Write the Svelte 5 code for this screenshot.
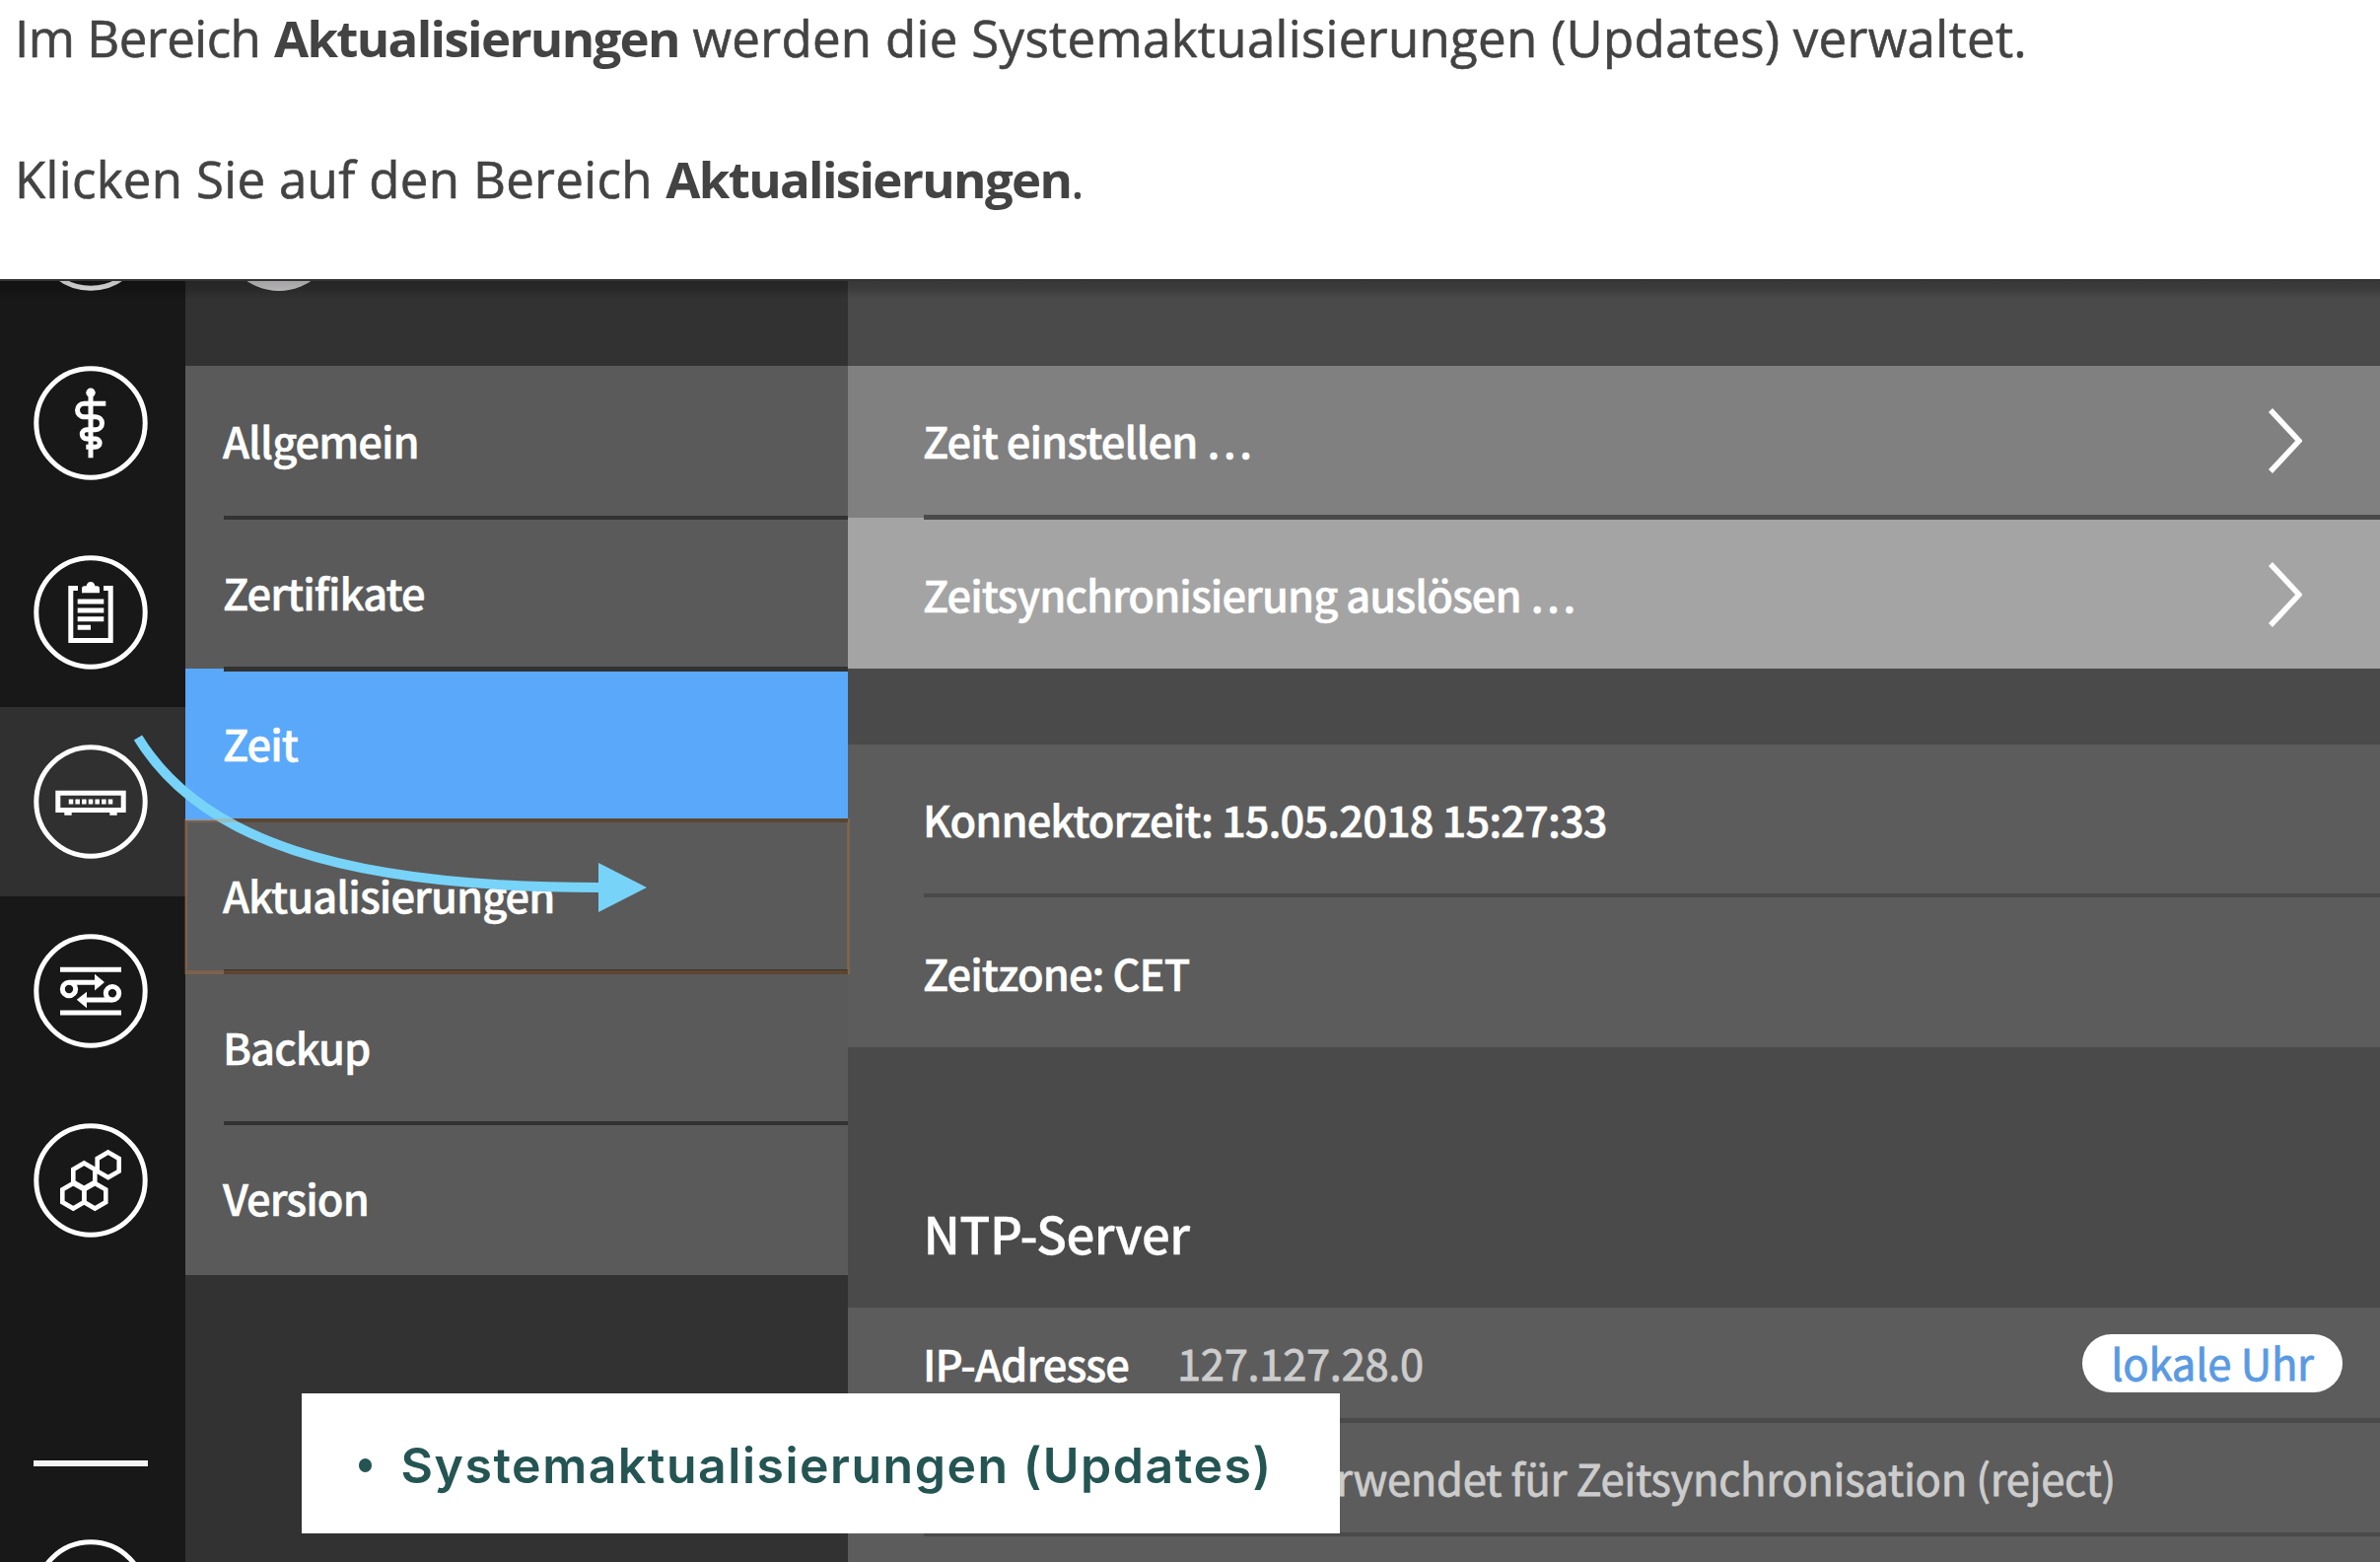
<script>
  const menu = ['Allgemein', 'Zertifikate', 'Zeit', 'Aktualisierungen', 'Backup', 'Version'];
  const selected = 'Zeit';
  const focused = 'Aktualisierungen';
  const rail = ['home', 'medical', 'clipboard', 'device', 'network', 'modules'];
  const hexes = [[75.7, 42.3], [51.3, 53.3], [40.3, 73.7], [62.3, 73.7]];
  const hex = ([x, y]) =>
    `M${x} ${y - 12.8}l11 6.4v12.8l-11 6.4l-11 -6.4v-12.8z`;
  const actions = [
    { label: 'Zeit einstellen …', cls: 'a1' },
    { label: 'Zeitsynchronisierung auslösen …', cls: 'a2' }
  ];
</script>

<div class="page">
  <section class="intro">
    <p class="l1"><span>Im Bereich</span> <b>Aktualisierungen</b> werden die Systemaktualisierungen (Updates) verwaltet.</p>
    <p class="l2">Klicken Sie auf den Bereich <b>Aktualisierungen</b>.</p>
  </section>

  <section class="shot">
    <nav class="rail">
      {#each rail as icon}
        <div class="slot" class:active={icon === 'device'}>
          <svg class="icon" viewBox="0 0 116 116">
            <circle cx="58" cy="58" r="55.2" />
            {#if icon === 'medical'}
              <circle class="solid" cx="58" cy="27.3" r="4.7" />
              <path d="M58 27V93.3" />
              <path d="M73.3 38.3H51.2a6.7 6.7 0 0 0 0 13.4H63a6.5 6.5 0 0 1 0 13H53.9a4.65 4.65 0 0 0 0 9.3H63a4.15 4.15 0 0 1 0 8.3H53.3" />
            {:else if icon === 'clipboard'}
              <path d="M45 33.5H37.8V86.5H78.2V33.5H71" />
              <path class="solid" d="M49 38.3V34q0-2.7 2.7-2.7H53.5q1-4.3 4.5-4.3t4.5 4.3H64.3q2.7 0 2.7 2.7v4.3z" />
              <path d="M44.7 47H71.3M44.7 56H71.3M44.7 64.7H71.3M44.7 73.3H58" />
            {:else if icon === 'device'}
              <rect x="24.8" y="49.2" width="66.4" height="17.3" />
              <path class="solid" d="M31.3 69h7.4v2.7h-7.4zM77.3 69h7.4v2.7h-7.4z" />
              <path class="dots" d="M35.75 58H81" />
            {:else if icon === 'network'}
              <path d="M27 36.3H89M27 80H89M36 49.2H64M80 67H52" />
              <circle cx="36" cy="56" r="6.7" />
              <circle cx="80" cy="60.3" r="6.7" />
              <path class="solid" d="M62 40.7L72 49L62 57.5zM54 58.7L43.8 66.8L54 75.2z" />
            {:else if icon === 'modules'}
              {#each hexes as h}<path class="thin" d={hex(h)} />{/each}
            {/if}
          </svg>
        </div>
      {/each}
      <hr />
      <div class="slot">
        <svg class="icon" viewBox="0 0 116 116"><circle cx="58" cy="58" r="55.2" /></svg>
      </div>
    </nav>

    <aside class="side">
      <div class="head"><span class="avatar"></span></div>
      {#each menu as item}
        <div class="item" class:selected={item === selected} class:focused={item === focused}>
          <span class="t">{item}</span>
        </div>
      {/each}
    </aside>

    <main class="content">
      <div class="group actions">
        {#each actions as a}
          <div class="row {a.cls}">
            <span class="t">{a.label}</span>
            <svg class="chevron" viewBox="0 0 36 70"><path d="M4 4L33 35L4 66" /></svg>
          </div>
        {/each}
      </div>
      <div class="group info">
        <div class="row"><span class="t">Konnektorzeit: 15.05.2018 15:27:33</span></div>
        <div class="row"><span class="t">Zeitzone: CET</span></div>
      </div>
      <h2>NTP-Server</h2>
      <div class="group ntp">
        <div class="row">
          <span class="t ipl">IP-Adresse</span>
          <span class="v">127.127.28.0</span>
          <span class="pill"><span>lokale Uhr</span></span>
        </div>
        <div class="row"><span class="v status">verwendet für Zeitsynchronisation (reject)</span></div>
        <div class="row"></div>
      </div>
    </main>

    <div class="shade"></div>
    <svg class="arrow" viewBox="0 0 560 200">
      <path class="line" d="M20 28C83 131 225 180 488 180" />
      <path class="tip" d="M487 155L536 180L487 205z" />
    </svg>
    <div class="note"><i></i><span>Systemaktualisierungen (Updates)</span></div>
  </section>
</div>

<style>
  :global(body) { margin: 0; background: #fff; overflow: hidden; }
  .page { width: 2414px; height: 1584px; overflow: hidden; display: flex; flex-direction: column; }

  .intro {
    height: 283px; flex: none; color: #434343; font: 51px/72px "Open Sans", "Noto Sans", sans-serif;
    letter-spacing: .32px; -webkit-text-stroke: .6px;
  }
  .intro p { margin: 0 0 73px; padding-left: 15px; white-space: nowrap; height: 72px; }
  .intro .l1 { padding-top: 2px; height: 70px; }
  .intro .l1 span { letter-spacing: -.5px; }
  .intro b { font-weight: 700; letter-spacing: -1.7px; -webkit-text-stroke: 0; }

  .shot {
    position: relative; flex: 1; display: flex; overflow: hidden; color: #fff;
    font: 500 43.5px/60px "Noto Sans CJK SC", "Noto Sans", sans-serif;
    letter-spacing: -.95px;
  }

  .rail { width: 188px; flex: none; background: #181818; overflow: hidden; }
  .slot { height: 192px; padding-left: 34px; display: flex; align-items: center; }
  .slot:first-child { margin-top: -142px; }
  .slot.active { background: #303030; }
  .icon { width: 116px; height: 116px; fill: none; stroke: #fff; stroke-width: 5; }
  .icon .solid { fill: #fff; stroke: none; }
  .icon .thin { stroke-width: 4.6; }
  .icon .dots { stroke-width: 5; stroke-dasharray: 4.5 2.17; }
  hr { width: 116px; height: 6px; margin: 188px 0 36px 34px; border: 0; background: #f4f4f4; }

  .side { width: 671.5px; flex: none; background: #323232; }
  .head { height: 88px; padding-left: 37px; display: flex; align-items: flex-start; overflow: hidden; }
  .avatar { width: 116px; height: 116px; border-radius: 50%; background: #dcdadc; margin-top: -104px; flex: none; }
  .item { position: relative; height: 153.6px; background: #5a5a5a; padding-left: 38px; display: flex; align-items: center; }
  .t { margin-top: -1px; white-space: pre; -webkit-text-stroke: .5px; }
  .item.selected { background: #5aa8f9; }
  .item + .item::before {
    content: ""; position: absolute; left: 38.5px; right: 0; top: -2px; height: 4.5px; background: #323232;
  }
  .item.focused::after {
    content: ""; position: absolute; z-index: 2; left: -1.5px; right: -2.5px; top: -1.5px; bottom: -2.5px;
    border: solid rgba(225, 129, 41, .25); border-width: 4px 3px;
  }

  .content { flex: 1; background: #4a4a4a; padding-top: 88px; }
  .row {
    position: relative; height: 153.65px; box-sizing: border-box; padding-left: 76.5px;
    display: flex; align-items: center; background: #5c5c5c;
  }
  .row + .row { padding-top: 4px; }
  .row + .row::before {
    content: ""; position: absolute; left: 77px; right: 0; top: -2.5px; height: 4.5px; background: #4a4a4a;
  }
  .a1 { background: #808080; }
  .a2 { background: #a4a4a4; }
  .chevron { width: 36px; height: 70px; margin: -1px 79px 0 auto; fill: none; stroke: #fff; stroke-width: 5.5; }
  .info { margin-top: 76.5px; }
  h2 {
    margin: 0; height: 263.5px; box-sizing: border-box; padding: 152px 0 0 77px;
    font-weight: 500; font-size: 51px; line-height: 72px; letter-spacing: -.6px; -webkit-text-stroke: .3px;
  }
  .ntp .row { height: 115.3px; }
  .v { color: #ccc; font-weight: 400; margin-top: -2px; white-space: pre; letter-spacing: -.3px; -webkit-text-stroke: .8px; }
  .ipl { width: 258px; }
  .pill {
    margin: -1px 38px 0 auto; width: 264px; height: 59px; border-radius: 30px;
    background: #fff; color: #5a9ae2; display: flex; align-items: center; justify-content: center;
    font-weight: 400; letter-spacing: -.2px; -webkit-text-stroke: .8px;
  }
  .pill span { margin-top: -2px; }
  .v.status { margin: -4px 268px 0 auto; }

  .shade {
    position: absolute; left: 0; right: 0; top: 0; height: 20px; border-top: 2px solid #343434; box-sizing: border-box;
    background: linear-gradient(rgba(0, 0, 0, .25), rgba(0, 0, 0, .2) 40%, transparent);
  }
  .arrow { position: absolute; left: 120px; top: 437px; width: 560px; height: 200px; overflow: visible; }
  .line { fill: none; stroke: #78d3f9; stroke-width: 9.8; }
  .tip { fill: #78d3f9; }
  .note {
    position: absolute; left: 306px; top: 1130px; width: 1053px; height: 141.5px; background: #fff; color: #245553;
    display: flex; align-items: center; padding-left: 57.5px; box-sizing: border-box;
    font: 600 50px/60px "Inter", sans-serif; letter-spacing: 1.5px;
  }
  .note i { width: 13.5px; height: 13.5px; border-radius: 50%; background: #245553; margin: 4px 29.5px 0 0; }
  .note span { white-space: pre; margin-top: 4px; }
</style>
